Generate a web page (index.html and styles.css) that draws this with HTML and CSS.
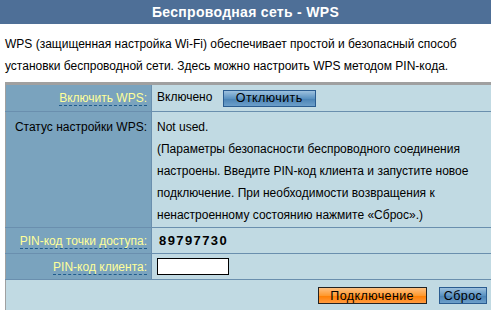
FILE: index.html
```html
<html>

<head>
    <meta http-equiv="Content-Type" content="text/html; charset=UTF-8">
    <link rel="stylesheet" href="styles.css">
</head>

<body>
    <div class="page">
        <div class="title">Беспроводная сеть - WPS</div>

        <div class="intro">
            WPS (защищенная настройка Wi-Fi) обеспечивает простой и безопасный способ
            установки беспроводной сети. Здесь можно настроить WPS методом PIN-кода.
        </div>

        <table class="form">
            <tr class="row-enable">
                <th><span class="hint">Включить WPS:</span></th>
                <td>
                    <span class="state">Включено</span>
                    <button class="btn btn-blue btn-off">Отключить</button>
                </td>
            </tr>
            <tr class="row-status">
                <th>Статус настройки WPS:</th>
                <td>
                    <div>Not used.</div>
                    <div>(Параметры безопасности беспроводного соединения настроены. Введите PIN-код клиента и запустите новое подключение. При необходимости возвращения к ненастроенному состоянию нажмите «Сброс».)</div>
                </td>
            </tr>
            <tr class="row-pin">
                <th><span class="hint">PIN-код точки доступа:</span></th>
                <td><span class="pin">89797730</span></td>
            </tr>
            <tr class="row-client">
                <th><span class="hint">PIN-код клиента:</span></th>
                <td><input class="pin-input" type="text"></td>
            </tr>
            <tr class="row-actions">
                <td colspan="2">
                    <button class="btn btn-orange">Подключение</button>
                    <button class="btn btn-blue btn-reset">Сброс</button>
                </td>
            </tr>
        </table>
    </div>
</body>

</html>
```

FILE: styles.css
```css
body {
    margin: 0;
    overflow: hidden;
    background: #ffffff;
}

.page {
    font-family: "Liberation Sans", Arial, sans-serif;
    font-size: 12px;
    color: #000000;
    width: 491px;
}

.title {
    height: 24px;
    line-height: 24px;
    background: #4e6f97;
    color: #ffffff;
    font-weight: bold;
    font-size: 14px;
    text-align: center;
    letter-spacing: 0.3px;
}

.intro {
    padding: 9px 10px 0 5px;
    line-height: 22px;
    height: 49px;
}

.form {
    margin-left: 5px;
    width: 490px;
    border-collapse: collapse;
    border-top: 3px solid #a0a0a0;
    border-left: 1px solid #a0a0a0;
}

.form th,
.form td {
    font-family: "Liberation Sans", Arial, sans-serif;
    font-size: 12px;
    color: #000000;
    border-bottom: 1px solid #6a8fae;
    padding: 0 0 0 5px;
}

.form th {
    width: 141px;
    background: #7aa3be;
    font-weight: normal;
    text-align: right;
    padding: 0 4px 0 0;
    border-right: 1px solid #6a8fae;
    vertical-align: middle;
    white-space: nowrap;
}

.form td {
    background: #c1dae3;
}

.hint {
    color: #ffff99;
    border-bottom: 1px dashed #1f5c8c;
}

.row-enable th,
.row-enable td {
    height: 28px;
}

.state {
    margin-right: 7px;
}

.row-status th,
.row-status td {
    vertical-align: top;
    line-height: 22px;
    padding-top: 4px;
    padding-bottom: 1px;
}

.row-status td {
    padding-right: 20px;
}

.row-pin th,
.row-pin td {
    height: 26px;
}

.pin {
    font-weight: bold;
    font-size: 13px;
    letter-spacing: 1.4px;
    margin-left: 2px;
}

.row-client th,
.row-client td {
    height: 26px;
}

.pin-input {
    width: 72px;
    height: 17px;
    border: 1px solid #000000;
    margin: 0;
    padding: 0;
    vertical-align: middle;
}

.row-actions td {
    border-bottom: none;
    text-align: right;
    height: 30px;
    padding-right: 8px;
    padding-top: 2px;
}

.btn {
    font-family: "Liberation Sans", Arial, sans-serif;
    font-size: 12.5px;
    color: #000000;
    height: 17px;
    padding: 0 6px;
    margin: 0;
    letter-spacing: 0.4px;
    line-height: 14px;
    vertical-align: middle;
}

.btn-blue {
    border: 1px solid #2a5c90;
    background: linear-gradient(#9dc1de, #5b93c2 50%, #4a82b4 51%, #6c9fca);
}

.btn-off {
    width: 93px;
}

.btn-orange {
    width: 109px;
    border: 1px solid #222222;
    background: linear-gradient(#ffc080, #ff9a30 50%, #ff7e00 51%, #ff9a40);
    margin-right: 9px;
}

.btn-reset {
    width: 48px;
    padding: 0 3px;
}
```
